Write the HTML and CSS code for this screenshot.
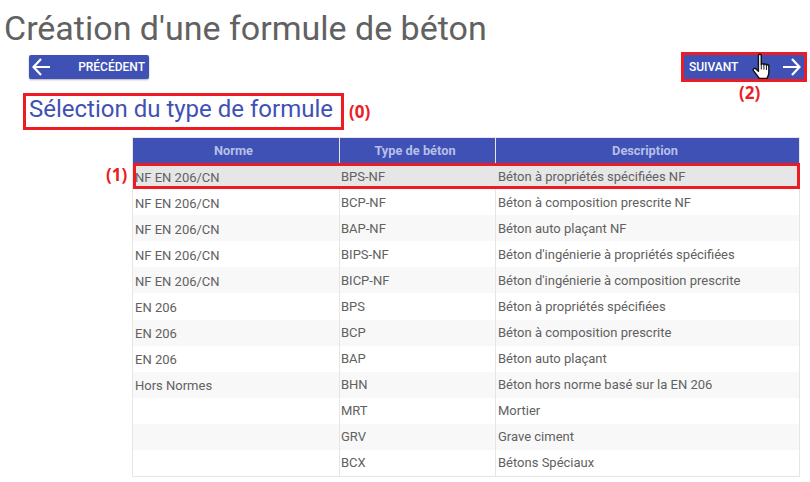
FILE: index.html
```html
<!DOCTYPE html>
<html lang="fr">
<head>
<meta charset="utf-8">
<title>Création d'une formule de béton</title>
<link rel="stylesheet" href="styles.css">
</head>
<body>
<h1 class="page-title">Création d'une formule de béton</h1>
<div class="nav">
  <button class="btn btn-prev" type="button">
    <svg class="arrow" viewBox="0 0 20 20" width="20" height="20"><path d="M19 10H2.500M10 2L2.500 10L10 18" fill="none" stroke="#fff" stroke-width="2.200"/></svg>
    <span>PRÉCÉDENT</span>
  </button>
  <div class="next-col">
    <div class="next-frame">
      <button class="btn btn-next" type="button">
        <span>SUIVANT</span>
        <svg class="arrow" viewBox="0 0 20 20" width="20" height="20"><path d="M1 10H17.500M10 2L17.500 10L10 18" fill="none" stroke="#fff" stroke-width="2.200"/></svg>
      </button>
      <svg class="cursor" viewBox="0 0 18 24" width="18" height="24"><path d="M6 2.500c0-1.600 2.400-1.600 2.400 0V10c0-.9 2.200-1 2.200.2 0-1 2.100-1 2.100.3 0-.9 2-.8 2 .6v5.400c0 2.300-1 3.500-1.500 5H6.700C5.500 19.500 3.800 17.500 2 15.200c-1-1.500.8-2.700 2-1.600L6 15.500Z" fill="#fff" stroke="#111" stroke-width="1.200" stroke-linejoin="round"/><path d="M8.400 10v4M10.600 10.200v4M12.700 10.500v4" stroke="#111" stroke-width=".8" fill="none"/></svg>
    </div>
    <div class="mark mark-next">(2)</div>
  </div>
</div>
<div class="section">
  <h2 class="section-title">Sélection du type de formule</h2>
  <span class="mark">(0)</span>
</div>
<div class="table-wrap">
  <span class="mark mark-row">(1)</span>
  <table class="grid">
    <thead>
      <tr><th class="c1">Norme</th><th class="c2">Type de béton</th><th class="c3">Description</th></tr>
    </thead>
    <tbody>
      <tr class="selected"><td>NF EN 206/CN</td><td>BPS-NF</td><td>Béton à propriétés spécifiées NF</td></tr>
      <tr><td>NF EN 206/CN</td><td>BCP-NF</td><td>Béton à composition prescrite NF</td></tr>
      <tr><td>NF EN 206/CN</td><td>BAP-NF</td><td>Béton auto plaçant NF</td></tr>
      <tr><td>NF EN 206/CN</td><td>BIPS-NF</td><td>Béton d'ingénierie à propriétés spécifiées</td></tr>
      <tr><td>NF EN 206/CN</td><td>BICP-NF</td><td>Béton d'ingénierie à composition prescrite</td></tr>
      <tr><td>EN 206</td><td>BPS</td><td>Béton à propriétés spécifiées</td></tr>
      <tr><td>EN 206</td><td>BCP</td><td>Béton à composition prescrite</td></tr>
      <tr><td>EN 206</td><td>BAP</td><td>Béton auto plaçant</td></tr>
      <tr><td>Hors Normes</td><td>BHN</td><td>Béton hors norme basé sur la EN 206</td></tr>
      <tr><td></td><td>MRT</td><td>Mortier</td></tr>
      <tr><td></td><td>GRV</td><td>Grave ciment</td></tr>
      <tr><td></td><td>BCX</td><td>Bétons Spéciaux</td></tr>
    </tbody>
  </table>
</div>
</body>
</html>
```
FILE: styles.css
```css
html, body {
  margin: 0;
  padding: 0;
  background: #fff;
  font-family: Roboto, "Liberation Sans", sans-serif;
  overflow: hidden;
}
.page-title {
  margin: 0;
  padding: 8px 0 0 4px;
  height: 44px;
  font-size: 34px;
  line-height: 40px;
  font-weight: 400;
  color: #616161;
}
.nav {
  display: flex;
  justify-content: space-between;
  align-items: flex-start;
  height: 38px;
  padding: 3px 3px 0 29px;
}
.btn {
  display: flex;
  align-items: center;
  justify-content: space-between;
  box-sizing: border-box;
  width: 120px;
  height: 24px;
  margin: 0;
  border: 0;
  border-radius: 2px;
  background: #3f51b5;
  color: #fff;
  font-family: inherit;
  font-size: 12px;
  font-weight: 500;
}
.btn-prev {
  padding: 0 4px 0 2px;
  box-shadow: 0 1px 2px rgba(0, 0, 0, .3);
}
.btn-next {
  padding: 0 2px 0 5px;
  border-radius: 0;
}
.next-col {
  position: relative;
  margin-top: -3px;
}
.next-frame {
  position: relative;
  border: 3px solid #ed1c24;
}
.cursor {
  position: absolute;
  left: 69px;
  top: 0;
  transform: scale(1.2);
}
.mark {
  font-family: "Open Sans", "Noto Sans", sans-serif;
  font-size: 17px;
  font-weight: 700;
  color: #ed1c24;
  line-height: 20px;
}
.mark-next {
  position: absolute;
  left: 58px;
  top: 31px;
}
.section {
  display: flex;
  align-items: center;
  gap: 5px;
  margin-left: 23px;
  height: 37px;
}
.section-title {
  box-sizing: border-box;
  margin: 0;
  height: 37px;
  padding: 0 8px 0 3px;
  border: 3px solid #ed1c24;
  font-size: 24px;
  line-height: 27px;
  font-weight: 400;
  color: #3f51b5;
  white-space: nowrap;
}
.table-wrap {
  position: relative;
  margin: 7px 10px 0 132px;
}
.mark-row {
  position: absolute;
  left: -26px;
  top: 28px;
}
.grid {
  width: 668px;
  table-layout: fixed;
  border-collapse: collapse;
  border: 1px solid #e6e6e6;
  font-size: 13px;
  color: #616161;
}
.c1 { width: 206px; }
.c2 { width: 155px; }
.grid th {
  height: 25px;
  padding: 0;
  background: #3f51b5;
  color: #b6bfe8;
  font-weight: 700;
  font-size: 12.8px;
  text-align: center;
  text-indent: -5px;
  border-left: 1px solid #e6e6e6;
}
.grid th:first-child,
.grid td:first-child {
  border-left: 0;
}
.grid td {
  height: 26.1px;
  padding: 0 0 0 1px;
  border-left: 1px solid #e6e6e6;
  white-space: nowrap;
  box-sizing: border-box;
}
.grid td:first-child {
  padding-top: 2px;
}
.grid td:first-child,
.grid td:last-child {
  padding-left: 2px;
}
.grid tbody tr:nth-child(odd) {
  background: #f8f8f8;
}
.grid tbody tr:nth-child(even) {
  background: #fff;
}
.grid tbody tr.selected {
  background: #e6e6e6;
  outline: 3px solid #ed1c24;
  outline-offset: -3px;
}
```
